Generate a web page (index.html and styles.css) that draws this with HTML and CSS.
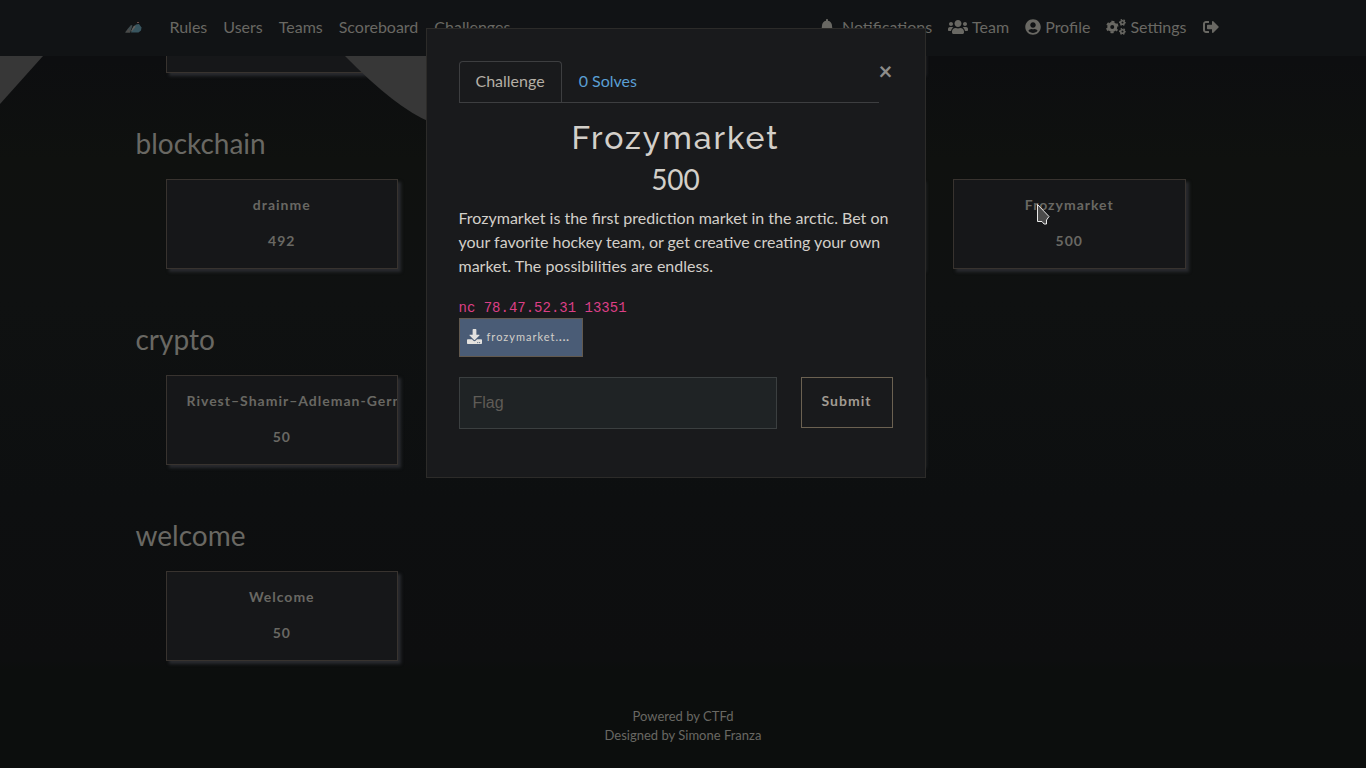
FILE: index.html
```html
<!DOCTYPE html>
<html lang="en">
<head>
<meta charset="utf-8">
<title>Challenges</title>
<link rel="stylesheet" href="styles.css">
</head>
<body>
<header class="navbar">
  <nav class="navbar-inner">
    <a class="brand" href="#" aria-label="Home">
      <svg width="25" height="16" viewBox="0 0 25 16" aria-hidden="true">
        <path d="M4 13.500 7 9.500 10 6l1.500.5L10 11l-1 2.500z" fill="#3f4b4e"/>
        <path d="M4.500 13.500 7.500 10l2 3.500z" fill="#4c4a48"/>
        <path d="M10 13.500 12 8l3-2.500 3-.5 2.500 3.500-.5 3-2.500 2z" fill="#38555f"/>
        <path d="M9.500 13 12.500 7.500l1.500-1 .5 1.500-3 3.500z" fill="#65605c"/>
        <path d="M16 3h2v1h-2z" fill="#6b4f4b"/>
      </svg>
    </a>
    <ul class="menu">
      <li><a href="#">Rules</a></li>
      <li><a href="#">Users</a></li>
      <li><a href="#">Teams</a></li>
      <li><a href="#">Scoreboard</a></li>
      <li><a href="#">Challenges</a></li>
    </ul>
    <ul class="menu menu-right">
      <li><a class="spaced" href="#"><svg width="14" height="16" viewBox="0 0 448 512" aria-hidden="true"><path d="M224 512c35.32 0 63.97-28.65 63.97-64H160.03c0 35.35 28.65 64 63.97 64zm215.39-149.71c-19.32-20.76-55.47-51.99-55.47-154.29 0-77.7-54.48-139.9-127.94-155.16V32c0-17.67-14.32-32-31.98-32s-31.98 14.33-31.98 32v20.84C118.56 68.1 64.08 130.3 64.08 208c0 102.3-36.15 133.53-55.47 154.29-6 6.45-8.66 14.16-8.61 21.71.11 16.4 12.98 32 32.1 32h383.8c19.12 0 32-15.6 32.1-32 .05-7.55-2.61-15.27-8.61-21.71z"/></svg>Notifications</a></li>
      <li><a href="#"><svg width="20" height="16" viewBox="0 0 640 512" aria-hidden="true"><path d="M96 224c35.3 0 64-28.7 64-64s-28.7-64-64-64-64 28.7-64 64 28.7 64 64 64zm448 0c35.3 0 64-28.7 64-64s-28.7-64-64-64-64 28.7-64 64 28.7 64 64 64zm32 32h-64c-17.6 0-33.5 7.1-45.1 18.6 40.3 22.1 68.9 62 75.1 109.4h66c17.7 0 32-14.3 32-32v-32c0-35.3-28.7-64-64-64zm-256 0c61.9 0 112-50.1 112-112S381.9 32 320 32 208 82.1 208 144s50.1 112 112 112zm76.8 32h-8.3c-20.8 10-43.9 16-68.5 16s-47.6-6-68.5-16h-8.3C179.6 288 128 339.6 128 403.2V432c0 26.5 21.5 48 48 48h288c26.5 0 48-21.5 48-48v-28.8c0-63.6-51.6-115.2-115.2-115.2zm-223.7-13.4C161.5 263.1 145.6 256 128 256H64c-35.3 0-64 28.7-64 64v32c0 17.7 14.3 32 32 32h65.9c6.3-47.4 34.9-87.3 75.2-109.4z"/></svg>Team</a></li>
      <li><a href="#"><svg width="16" height="16" viewBox="0 0 496 512" aria-hidden="true"><path d="M248 8C111 8 0 119 0 256s111 248 248 248 248-111 248-248S385 8 248 8zm0 96c48.6 0 88 39.4 88 88s-39.4 88-88 88-88-39.4-88-88 39.4-88 88-88zm0 344c-58.7 0-111.3-26.6-146.5-68.2 18.8-35.4 55.6-59.8 98.5-59.8 2.4 0 4.8.4 7.1 1.1 13 4.2 26.6 6.9 40.9 6.9 14.3 0 28-2.7 40.9-6.9 2.3-.7 4.7-1.1 7.1-1.1 42.9 0 79.7 24.4 98.5 59.8C359.3 421.4 306.7 448 248 448z"/></svg>Profile</a></li>
      <li><a href="#"><svg class="gears" width="20" height="16" viewBox="0 0 640 512" aria-hidden="true">
        <circle cx="200" cy="256" r="112" stroke-width="95"/>
        <circle cx="200" cy="256" r="172" stroke-width="56" stroke-dasharray="94 86.1" stroke-dashoffset="47" transform="rotate(30 200 256)"/>
        <circle cx="528" cy="112" r="58" stroke-width="50"/>
        <circle cx="528" cy="112" r="92" stroke-width="36" stroke-dasharray="50 46.3" stroke-dashoffset="25"/>
        <circle cx="528" cy="400" r="58" stroke-width="50"/>
        <circle cx="528" cy="400" r="92" stroke-width="36" stroke-dasharray="50 46.3" stroke-dashoffset="25"/>
      </svg>Settings</a></li>
      <li><a href="#" aria-label="Log out"><svg width="16" height="16" viewBox="0 0 512 512" aria-hidden="true"><path d="M497 273L329 441c-15 15-41 4.5-41-17v-96H152c-13.3 0-24-10.7-24-24v-96c0-13.3 10.7-24 24-24h136V88c0-21.4 25.9-32 41-17l168 168c9.3 9.4 9.3 24.6 0 34zM192 436v-40c0-6.6-5.4-12-12-12H96c-17.7 0-32-14.3-32-32V160c0-17.7 14.3-32 32-32h84c6.6 0 12-5.4 12-12V76c0-6.6-5.4-12-12-12H96c-53 0-96 43-96 96v192c0 53 43 96 96 96h84c6.6 0 12-5.4 12-12z"/></svg></a></li>
    </ul>
  </nav>
</header>

<main class="board">
  <section class="category">
    <div class="cards">
      <button class="card" type="button"></button>
      <button class="card" type="button"></button>
      <button class="card" type="button"></button>
    </div>
  </section>
  <section class="category">
    <h3>blockchain</h3>
    <div class="cards">
      <button class="card" type="button"><span>drainme</span><span>492</span></button>
      <button class="card" type="button"></button>
      <button class="card" type="button"></button>
      <button class="card" type="button"><span>Frozymarket</span><span>500</span></button>
    </div>
  </section>
  <section class="category">
    <h3>crypto</h3>
    <div class="cards">
      <button class="card card-long" type="button"><span>Rivest–Shamir–Adleman-Germ</span><span>50</span></button>
      <button class="card" type="button"></button>
      <button class="card" type="button"></button>
    </div>
  </section>
  <section class="category">
    <h3>welcome</h3>
    <div class="cards">
      <button class="card" type="button"><span>Welcome</span><span>50</span></button>
    </div>
  </section>
</main>

<footer class="footer">
  <a href="#">Powered by CTFd</a>
  <a href="#">Designed by Simone Franza</a>
</footer>

<svg class="shapes" width="560" height="140" viewBox="0 0 560 140" aria-hidden="true">
  <path d="M0 56H43L0 104Z"/>
  <path d="M345 56Q396 108 430 122H560V56Z"/>
</svg>

<div class="overlay">
  <div class="modal" role="dialog" aria-labelledby="title">
    <button class="close" type="button" aria-label="Close">×</button>
    <ul class="tabs">
      <li><a class="tab active" href="#">Challenge</a></li>
      <li><a class="tab" href="#">0 Solves</a></li>
    </ul>
    <h2 class="title" id="title">Frozymarket</h2>
    <h3 class="points">500</h3>
    <p class="text">Frozymarket is the first prediction market in the arctic. Bet on your favorite hockey team, or get creative creating your own market. The possibilities are endless.</p>
    <p class="text"><code>nc 78.47.52.31 13351</code></p>
    <a class="file" href="#"><svg width="15" height="15" viewBox="0 0 512 512" aria-hidden="true"><path d="M216 0h80c13.3 0 24 10.7 24 24v168h87.7c17.8 0 26.7 21.5 14.1 34.1L269.7 378.3c-7.5 7.5-19.8 7.5-27.3 0L90.1 226.1c-12.6-12.6-3.7-34.1 14.1-34.1H192V24c0-13.3 10.7-24 24-24zm296 376v112c0 13.3-10.7 24-24 24H24c-13.3 0-24-10.7-24-24V376c0-13.3 10.7-24 24-24h146.7l49 49c20.1 20.1 52.5 20.1 72.6 0l49-49H488c13.3 0 24 10.7 24 24zm-124 88c0-11-9-20-20-20s-20 9-20 20 9 20 20 20 20-9 20-20zm64 0c0-11-9-20-20-20s-20 9-20 20 9 20 20 20 20-9 20-20z"/></svg><span>frozymarket.<b>...</b></span></a>
    <form class="answer">
      <input type="text" placeholder="Flag" aria-label="Flag">
      <button type="button">Submit</button>
    </form>
  </div>
</div>

<svg class="pointer" width="14" height="24" viewBox="0 0 14 24" aria-hidden="true">
  <path d="M1.500 1.500V18.500H6L8 21H10.500V17L13 13.500Z"/>
</svg>
</body>
</html>
```
FILE: styles.css
```css
* { box-sizing: border-box; }

body {
  margin: 0;
  min-height: 100vh;
  display: flex;
  flex-direction: column;
  overflow: hidden;
  position: relative;
  font: 16px/24px Lato, sans-serif;
  color: #696863;
  background: linear-gradient(#0d0e10 60px, #0f110f 160px, #0f1111 300px, #0d0f10 500px, #0d0e0f 660px, #0c0e0d 670px);
}

h2, h3, p, ul { margin: 0; padding: 0; font-weight: 400; }
ul { list-style: none; }
a { color: inherit; text-decoration: none; }
button, input { font: inherit; color: inherit; }

.navbar {
  position: fixed;
  top: 0;
  left: 0;
  right: 0;
  z-index: 2;
  height: 56px;
  padding: 0 15px 2px 0;
  background: #111315;
}
.navbar-inner {
  max-width: 1140px;
  height: 100%;
  margin: 0 auto;
  padding: 0 19px 0 15px;
  display: flex;
  align-items: center;
}
.brand { display: flex; margin-right: 16px; }
.menu { display: flex; align-items: center; }
.menu a { display: flex; align-items: center; gap: 4px; padding: 0 8px; }
.menu .spaced { gap: 8px; }
.menu svg { fill: currentColor; }
.menu .gears { fill: none; stroke: currentColor; }
.menu-right { margin-left: auto; }

.board {
  width: 100%;
  max-width: 1095px;
  margin: -17px auto 0;
  padding-right: 45px;
}
.category h3 { padding-top: 53px; font-size: 28px; line-height: 34px; }
.category h3 + .cards { margin-top: 19px; }
.cards {
  display: grid;
  grid-template-columns: repeat(4, 1fr);
  gap: 30px;
  padding-left: 30px;
}
.card {
  height: 90px;
  padding: 8px 20px;
  display: flex;
  flex-direction: column;
  align-items: center;
  gap: 12px;
  overflow: hidden;
  border: 1px solid #38332f;
  background: #161719;
  box-shadow: 3px 3px 3px #292b2f;
  font-size: 14px;
  font-weight: 700;
  line-height: 24px;
  letter-spacing: 1px;
  white-space: nowrap;
}
.card span:first-child { margin-top: 5px; }
.card-long span:first-child { align-self: flex-start; }

.footer {
  margin-top: auto;
  padding-bottom: 23px;
  display: flex;
  flex-direction: column;
  align-items: center;
  font-size: 13px;
  line-height: 19px;
}

.shapes { position: absolute; top: 0; left: 0; z-index: 1; fill: #373737; }

.overlay {
  position: fixed;
  inset: 0;
  z-index: 3;
  padding: 28px 15px 0 0;
  display: flex;
  justify-content: center;
  align-items: flex-start;
}
.modal {
  position: relative;
  width: 500px;
  padding: 32px 32px 48px;
  border: 1px solid #2c2b29;
  background: #191a1c;
  color: #d3cfc9;
}
.close {
  position: absolute;
  top: 30px;
  right: 32px;
  padding: 0;
  border: 0;
  background: none;
  color: #8d8c8a;
  font-size: 24px;
  font-weight: 700;
  line-height: 24px;
}
.tabs { display: flex; margin-right: 14px; border-bottom: 1px solid #3d3e40; }
.tab {
  display: block;
  padding: 7px 16px 9px;
  border: 1px solid transparent;
  border-bottom: 0;
  border-radius: 4px 4px 0 0;
  color: #5a9fd4;
}
.tab.active { border-color: #3d3e40; color: #b5afa6; }
.title {
  margin-top: 16px;
  font: 500 32px/38px Raleway, Lato, sans-serif;
  letter-spacing: 2px;
  text-align: center;
}
.points { margin: 5px 0 10px; font-size: 28px; line-height: 34px; text-align: center; }
.text + .text { margin-top: 16px; }
code { font: 14px/16px "Liberation Mono", monospace; color: #dc3f86; }
.file {
  width: 124px;
  height: 39px;
  display: flex;
  align-items: center;
  gap: 5px;
  padding: 0 7px 2px;
  border: 1px solid #62594e;
  background: #4a5c76;
  font-size: 11px;
  letter-spacing: 1px;
}
.file b { font-weight: 900; }
.file svg { fill: #e4e2df; }
.answer { display: flex; align-items: flex-start; gap: 24px; margin-top: 20px; }
.answer input {
  flex: 1;
  min-width: 0;
  height: 52px;
  padding: 0 13px;
  border: 1px solid #3b3f40;
  background: #1f2325;
  font-family: "Liberation Sans", Arial, sans-serif;
}
.answer input::placeholder { color: #5f5c57; opacity: 1; }
.answer button {
  width: 92px;
  height: 51px;
  padding: 0 0 4px;
  border: 1px solid #6b6151;
  background: none;
  color: #a19b92;
  font-size: 14px;
  font-weight: 700;
  letter-spacing: 1px;
}

.pointer {
  position: absolute;
  top: 203px;
  left: 1036px;
  z-index: 4;
  fill: #4b4b4b;
  stroke: #e8e8e8;
}
```
